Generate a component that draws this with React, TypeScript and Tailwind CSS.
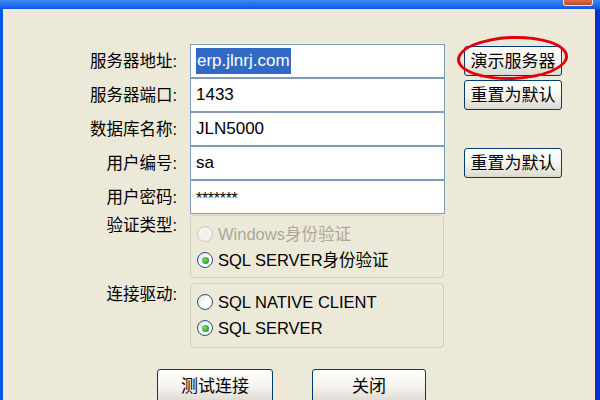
import React from 'react';

const font = "font-['Liberation_Sans','Noto_Sans_CJK_SC',sans-serif]";

const XpButton = ({ label, className = '' }: { label: string; className?: string }) => (
  <button
    className={`h-[30px] rounded-[3px] border border-[#003C74] bg-gradient-to-b from-white via-[#F5F4EF] to-[#DCDAD0] text-[17px] leading-none text-black ${className}`}
  >
    {label}
  </button>
);

const Radio = ({ checked = false, disabled = false }: { checked?: boolean; disabled?: boolean }) => (
  <span
    className={`flex h-[16px] w-[16px] shrink-0 items-center justify-center rounded-full border ${
      disabled
        ? 'border-[#CAC8BB] bg-[#F3F2EC]'
        : 'border-[#1C5180] bg-gradient-to-br from-[#DCDBD4] via-white to-white'
    }`}
  >
    {checked && (
      <span className="h-[7px] w-[7px] rounded-full bg-[radial-gradient(circle_at_40%_40%,#7BE07B,#21A121_70%)]" />
    )}
  </span>
);

const Field = ({ children }: { children: React.ReactNode }) => (
  <div className="flex h-[34px] w-[255px] items-center border border-[#7F9DB9] bg-white pl-[5px] text-[17px] text-black">
    {children}
  </div>
);

const rows: { label: string; value: React.ReactNode; button?: string; circled?: boolean }[] = [
  {
    label: '服务器地址:',
    value: <span className="bg-[#316AC5] px-[1px] text-white">erp.jlnrj.com</span>,
    button: '演示服务器',
    circled: true,
  },
  { label: '服务器端口:', value: '1433', button: '重置为默认' },
  { label: '数据库名称:', value: 'JLN5000' },
  { label: '用户编号:', value: 'sa', button: '重置为默认' },
  { label: '用户密码:', value: <span className="pt-[4px] text-[16px] tracking-[-0.3px]">*******</span> },
];

export default function App() {
  return (
    <div className={`flex h-[400px] w-[600px] flex-col overflow-hidden bg-[#0A4FE0] ${font}`}>
      {/* title bar strip */}
      <div className="relative h-[9px] shrink-0 bg-gradient-to-b from-[#3D8BF5] to-[#0A55E2]">
        <div className="absolute left-[563px] top-[-2px] h-[8px] w-[30px] rounded-b-[3px] border border-white/80 bg-gradient-to-b from-[#E27A55] to-[#C9401C]" />
      </div>

      <div className="flex flex-1 overflow-hidden border-l-[3px] border-r-[5px] border-l-[#0B55E4] border-r-[#0733CC]">
        <div className="flex-1 bg-[#ECE9D8] pt-[35px]">
          {rows.map((r, i) => (
            <div key={i} className="flex h-[34px] items-center">
              <div className="w-[187px] pr-[13px] text-right text-[16.5px] text-black">{r.label}</div>
              <Field>{r.value}</Field>
              {r.button && (
                <div className="relative ml-[19px]">
                  <XpButton label={r.button} className="w-[98px]" />
                  {r.circled && (
                    <div className="absolute left-[-7px] top-[-10px] h-[44px] w-[111px] -rotate-2 rounded-[50%] border-[3px] border-[#E3000B]" />
                  )}
                </div>
              )}
            </div>
          ))}

          {/* 验证类型 */}
          <div className="mt-[1px] flex">
            <div className="w-[187px] pr-[13px] text-right text-[16.5px] leading-[20px] text-black">验证类型:</div>
            <div className="h-[63px] w-[254px] rounded-[4px] border border-[#D0D0BF] pl-[6px] pt-[5px]">
              <div className="flex h-[26px] items-center gap-[5px] text-[16.5px] text-[#ACA899]">
                <Radio disabled />
                Windows身份验证
              </div>
              <div className="flex h-[26px] items-center gap-[5px] text-[16.5px] text-black">
                <Radio checked />
                SQL SERVER身份验证
              </div>
            </div>
          </div>

          {/* 连接驱动 */}
          <div className="mt-[5px] flex">
            <div className="w-[187px] pr-[13px] pt-[1px] text-right text-[16.5px] leading-[20px] text-black">连接驱动:</div>
            <div className="h-[65px] w-[254px] rounded-[4px] border border-[#D0D0BF] pl-[6px] pt-[5px]">
              <div className="flex h-[26px] items-center gap-[5px] text-[16.5px] text-black">
                <Radio />
                SQL NATIVE CLIENT
              </div>
              <div className="flex h-[26px] items-center gap-[5px] text-[16.5px] text-black">
                <Radio checked />
                SQL SERVER
              </div>
            </div>
          </div>

          <div className="mt-[21px] flex gap-[39px] pl-[154px]">
            <XpButton label="测试连接" className="h-[34px] w-[116px]" />
            <XpButton label="关闭" className="h-[34px] w-[114px]" />
          </div>
        </div>
      </div>
    </div>
  );
}
